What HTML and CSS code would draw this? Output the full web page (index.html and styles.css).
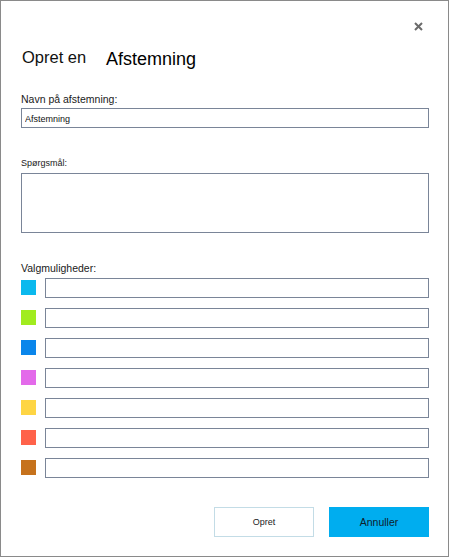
FILE: index.html
```html
<!DOCTYPE html>
<html lang="da">
<head>
<meta charset="utf-8">
<title>Opret en Afstemning</title>
<link rel="stylesheet" href="styles.css">
</head>
<body>
<div class="dialog">
  <div class="close-row">
    <svg class="close" width="9" height="9" viewBox="0 0 9 9" aria-label="Luk">
      <path d="M1 1 L8 8 M8 1 L1 8" stroke="#6b6b6b" stroke-width="2" fill="none"/>
    </svg>
  </div>
  <div class="title-row">
    <span class="title-pre">Opret en</span>
    <span class="title-main">Afstemning</span>
  </div>
  <label class="label label-name">Navn på afstemning:</label>
  <input class="field field-name" type="text" value="Afstemning">
  <label class="label label-small">Spørgsmål:</label>
  <textarea class="field field-question"></textarea>
  <label class="label label-options">Valgmuligheder:</label>
  <div class="options">
    <div class="option"><span class="swatch c1"></span><input class="field field-option" type="text"></div>
    <div class="option"><span class="swatch c2"></span><input class="field field-option" type="text"></div>
    <div class="option"><span class="swatch c3"></span><input class="field field-option" type="text"></div>
    <div class="option"><span class="swatch c4"></span><input class="field field-option" type="text"></div>
    <div class="option"><span class="swatch c5"></span><input class="field field-option" type="text"></div>
    <div class="option"><span class="swatch c6"></span><input class="field field-option" type="text"></div>
    <div class="option"><span class="swatch c7"></span><input class="field field-option" type="text"></div>
  </div>
  <div class="buttons">
    <button class="btn btn-secondary">Opret</button>
    <button class="btn btn-primary">Annuller</button>
  </div>
</div>
</body>
</html>
```
FILE: styles.css
```css
html, body {
  margin: 0;
  padding: 0;
  background: #ffffff;
}
body {
  font-family: "Liberation Sans", Arial, sans-serif;
  color: #1a1a1a;
}
.dialog {
  box-sizing: border-box;
  width: 449px;
  height: 557px;
  border: 1px solid #8a8a8a;
  padding: 21px 19px 0 20px;
  display: flex;
  flex-direction: column;
}
.close-row {
  display: flex;
  justify-content: flex-end;
  height: 9px;
}
.close {
  display: block;
  margin-right: 6px;
}
.title-row {
  display: flex;
  align-items: flex-start;
  margin-top: 16px;
  height: 22px;
}
.title-pre {
  font-size: 16.5px;
  line-height: 20px;
  margin-left: 1px;
  width: 84px;
  color: #111;
}
.title-main {
  font-size: 18px;
  line-height: 20px;
  margin-top: 2px;
  color: #000;
}
.label {
  display: block;
  font-size: 10.5px;
  line-height: 13px;
  color: #1a1a1a;
}
.label-name {
  margin-top: 24px;
}
.label-small {
  font-size: 9px;
  line-height: 11px;
  margin-top: 30px;
}
.label-options {
  margin-top: 29px;
}
.field {
  box-sizing: border-box;
  display: block;
  margin: 0;
  border: 1px solid #7a8598;
  border-radius: 0;
  background: #fff;
  outline: none;
  font-family: "Liberation Sans", Arial, sans-serif;
  color: #111;
}
.field-name {
  width: 408px;
  height: 20px;
  margin-top: 2px;
  padding: 2px 3px 0;
  font-size: 9px;
}
.field-question {
  width: 408px;
  height: 60px;
  margin-top: 4px;
  resize: none;
  padding: 2px 3px;
}
.options {
  display: flex;
  flex-direction: column;
  gap: 10px;
  margin-top: 3px;
}
.option {
  display: flex;
  align-items: flex-start;
  gap: 9px;
  height: 20px;
}
.swatch {
  display: block;
  width: 15px;
  height: 15px;
  margin-top: 2px;
}
.c1 { background: #0bb9ee; }
.c2 { background: #a1ec1f; }
.c3 { background: #0a86eb; }
.c4 { background: #e36aea; }
.c5 { background: #fed544; }
.c6 { background: #ff624a; }
.c7 { background: #c6721c; }
.field-option {
  width: 384px;
  height: 20px;
  padding: 0 3px;
  font-size: 9px;
}
.buttons {
  display: flex;
  justify-content: flex-end;
  gap: 15px;
  margin-top: 29px;
}
.btn {
  box-sizing: border-box;
  width: 100px;
  height: 30px;
  margin: 0;
  border-radius: 0;
  font-family: "Liberation Sans", Arial, sans-serif;
  cursor: pointer;
  display: flex;
  align-items: center;
  justify-content: center;
  padding: 0;
}
.btn-secondary {
  background: #ffffff;
  border: 1px solid #c3dce6;
  font-size: 9px;
  color: #222;
}
.btn-primary {
  background: #00adef;
  border: 1px solid #00adef;
  font-size: 10.5px;
  color: #10202a;
}
```
